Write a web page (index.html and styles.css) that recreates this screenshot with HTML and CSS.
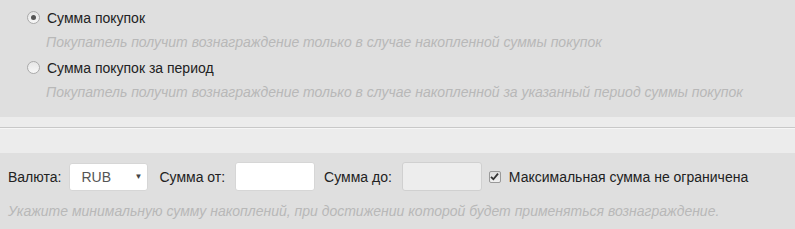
FILE: index.html
```html
<!DOCTYPE html>
<html lang="ru">
<head>
  <meta charset="UTF-8" />
  <title>Условия вознаграждения</title>
  <link rel="stylesheet" href="styles.css">
</head>
<body>
  <div class="options">
    <label class="option">
      <span class="radio checked"></span>
      Сумма покупок
    </label>
    <div class="hint indent">Покупатель получит вознаграждение только в случае накопленной суммы покупок</div>

    <label class="option">
      <span class="radio"></span>
      Сумма покупок за период
    </label>
    <div class="hint indent">Покупатель получит вознаграждение только в случае накопленной за указанный период суммы покупок</div>
  </div>

  <div class="divider">
    <div class="line"></div>
  </div>

  <div class="limits">
    <div class="row">
      <span class="lbl">Валюта:</span>
      <div class="select">
        <span>RUB</span>
        <span class="arrow">▼</span>
      </div>
      <span class="lbl from">Сумма от:</span>
      <div class="field"></div>
      <span class="lbl to">Сумма до:</span>
      <div class="field disabled"></div>
      <span class="check">
        <svg width="9" height="9" viewBox="0 0 9 9"><path d="M1 4.8 L3.4 7.2 L8 1.6" fill="none" stroke="#333" stroke-width="1.8"/></svg>
      </span>
      <span class="lbl">Максимальная сумма не ограничена</span>
    </div>
    <div class="hint">Укажите минимальную сумму накоплений, при достижении которой будет применяться вознаграждение.</div>
  </div>
</body>
</html>
```

FILE: styles.css
```css
body {
  margin: 0;
  font-family: "Liberation Sans", Arial, sans-serif;
  font-size: 14px;
  color: #222;
  background: #dfdfdf;
}

.options {
  padding: 5px 0 12px 27px;
  background: #dfdfdf;
}

.option {
  display: flex;
  align-items: center;
  height: 25px;
}

.radio {
  width: 11px;
  height: 11px;
  border: 1px solid #aaa;
  border-radius: 50%;
  background: linear-gradient(#e6e6e6, #f7f7f7);
  margin-right: 7px;
  display: flex;
  align-items: center;
  justify-content: center;
}

.radio.checked::after {
  content: "";
  width: 5px;
  height: 5px;
  border-radius: 50%;
  background: #555;
}

.hint {
  font-style: italic;
  color: #b8b8b8;
  line-height: 25px;
}

.indent {
  padding-left: 19px;
}

.divider {
  height: 36px;
  background: #ececec;
  padding-top: 10px;
  box-sizing: border-box;
}

.line {
  border-top: 1px solid #c8c8c8;
  border-bottom: 1px solid #f6f6f6;
}

.limits {
  padding: 9px 8px 0 8px;
}

.row {
  display: flex;
  align-items: center;
  height: 29px;
}

.select {
  width: 79px;
  height: 28px;
  box-sizing: border-box;
  margin-left: 8px;
  background: #fff;
  border: 1px solid #d6d6d6;
  border-radius: 3px;
  display: flex;
  align-items: center;
  justify-content: space-between;
  padding: 0 5px 0 11px;
  color: #555;
}

.arrow {
  font-size: 8px;
  color: #444;
}

.lbl.from {
  margin-left: 11px;
}

.lbl.to {
  margin-left: 9px;
}

.field {
  width: 80px;
  height: 29px;
  box-sizing: border-box;
  margin-left: 10px;
  background: #fff;
  border: 1px solid #d6d6d6;
  border-radius: 3px;
}

.field.disabled {
  margin-left: 10px;
  background: #ededed;
  border-color: #d0d0d0;
}

.check {
  width: 10px;
  height: 10px;
  margin: 0 8px 0 7px;
  border: 1px solid #999;
  border-radius: 2px;
  background: linear-gradient(#dcdcdc, #f0f0f0);
  display: flex;
  align-items: center;
  justify-content: center;
}

.limits .hint {
  margin-top: 8px;
}
```
